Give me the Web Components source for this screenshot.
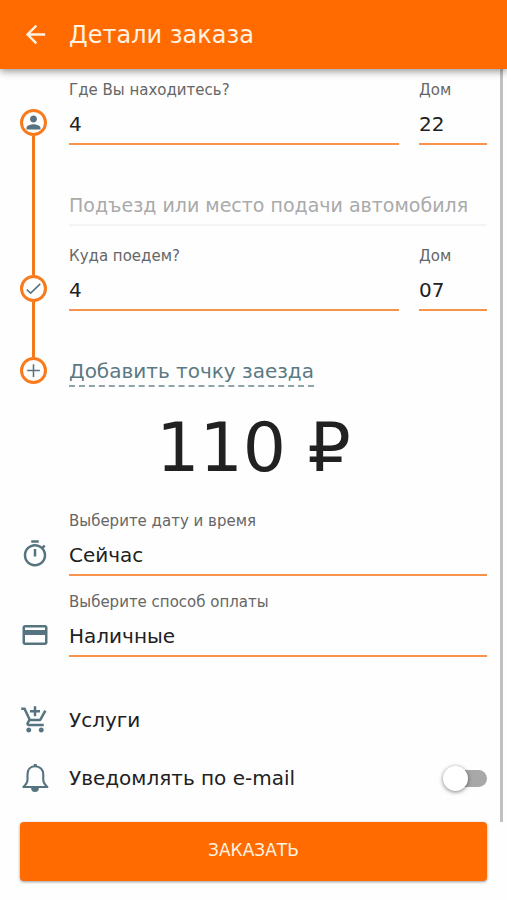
<!DOCTYPE html>
<html lang="ru">
<head>
<meta charset="utf-8">
<meta name="viewport" content="width=device-width, initial-scale=1">
<title>Детали заказа</title>
<style>
  html, body { height: 100%; margin: 0; }
  body {
    --accent: #ff6b00;
    --line: #f9924a;
    --icon: #56747f;
    --text: #212121;
    --muted: #666;
    background: #fefefe;
    color: var(--text);
    font-family: "DejaVu Sans", sans-serif;
    font-size: 20px;
  }
</style>
</head>
<body>
<order-page></order-page>

<script>
const define = (name, html, setup) => {
  const template = document.createElement('template');
  template.innerHTML = html;
  customElements.define(name, class extends HTMLElement {
    constructor() {
      super();
      this.attachShadow({ mode: 'open' }).append(template.content.cloneNode(true));
    }
    connectedCallback() { if (setup) setup(this, this.shadowRoot); }
  });
};

const icons = {
  back: '<path d="M20 11H7.83l5.59-5.59L12 4l-8 8 8 8 1.41-1.41L7.83 13H20v-2z"/>',
  person: '<path d="M12 12c2.21 0 4-1.79 4-4s-1.79-4-4-4-4 1.79-4 4 1.79 4 4 4zm0 2c-2.67 0-8 1.34-8 4v2h16v-2c0-2.66-5.33-4-8-4z"/>',
  check: '<path d="M2.5 13.5l5.5 5L21.500 5.500" fill="none" stroke="currentColor" stroke-width="2.200"/>',
  plus: '<path d="M12 3v18M3 12h18" fill="none" stroke="currentColor" stroke-width="2.200"/>',
  timer: '<path d="M15 1H9v2h6V1zm-4 13h2V8h-2v6zm8.030-6.610l1.420-1.420c-.430-.510-.900-.990-1.410-1.410l-1.420 1.420C16.070 4.740 14.120 4 12 4c-4.970 0-9 4.030-9 9s4.020 9 9 9 9-4.030 9-9c0-2.120-.740-4.070-1.970-5.610zM12 20c-3.870 0-7-3.130-7-7s3.130-7 7-7 7 3.130 7 7-3.130 7-7 7z"/>',
  card: '<path d="M20 4H4c-1.110 0-1.990.890-1.990 2L2 18c0 1.110.890 2 2 2h16c1.110 0 2-.890 2-2V6c0-1.110-.890-2-2-2zm0 14H4v-6h16v6zm0-10H4V6h16v2z"/>',
  cart: '<path d="M11 9h2V6h3V4h-3V1h-2v3H8v2h3v3zm-4 9c-1.100 0-1.990.900-1.990 2S5.900 22 7 22s2-.900 2-2-.900-2-2-2zm10 0c-1.100 0-1.990.900-1.990 2s.890 2 1.990 2 2-.900 2-2-.900-2-2-2zm-9.830-3.250l.030-.120.900-1.630h7.450c.750 0 1.410-.410 1.750-1.030l3.860-7.010L19.420 4h-.010l-1.100 2-2.760 5H8.530l-.130-.270L6.160 6l-.950-2-.940-2H1v2h2l3.600 7.590-1.350 2.450c-.160.280-.250.610-.250.960 0 1.100.900 2 2 2h12v-2H7.420c-.130 0-.250-.110-.250-.250z"/>',
  bell: '<path d="M12 2.600c-4 0-6 2.800-6 6.600v4c0 2.600-1.300 4.200-3.300 6h19.200c-2-1.800-3.300-3.400-3.300-6v-4c0-3.800-2.600-6.600-6.600-6.600z" fill="none" stroke="currentColor" stroke-width="1.700" stroke-linejoin="round"/><path d="M11 .7h2.400v2H11zM8.900 20h6.200a3.100 3.100 0 0 1-6.200 0z"/>'
};

define('app-icon', `
  <style>
    :host { display: block; width: 24px; height: 24px; flex: none; color: var(--icon); }
    svg { display: block; width: 100%; height: 100%; fill: currentColor; }
  </style>
  <svg viewBox="0 0 24 24" aria-hidden="true"></svg>`,
  (host, root) => { root.querySelector('svg').innerHTML = icons[host.getAttribute('name')]; });

define('app-header', `
  <style>
    :host {
      display: flex; align-items: center; height: 69px; flex: none; padding: 0 20px;
      background: var(--accent); color: #fff2e0; z-index: 1;
      box-shadow: 0 2px 8px rgba(0,0,0,.45);
    }
    button { width: 49px; padding: 0 0 0 1px; border: 0; background: none; color: inherit; cursor: pointer; }
    app-icon { width: 29px; height: 29px; color: inherit; }
    h1 { margin: 0; font-size: 24px; line-height: 28px; font-weight: 400; }
  </style>
  <button type="button" aria-label="Назад"><app-icon name="back"></app-icon></button>
  <h1><slot></slot></h1>`);

define('order-field', `
  <style>
    :host { display: flex; flex-direction: column; gap: 6px; min-width: 0; }
    label { font-size: 15px; line-height: 18px; color: var(--muted); white-space: nowrap; }
    label[hidden] { display: none; }
    input, select {
      appearance: none; box-sizing: border-box; width: 100%; height: 40px; margin: 0; padding: 0;
      border: 0; border-bottom: 2px solid var(--line); border-radius: 0; outline: 0;
      background: none; font: inherit; color: inherit;
    }
    input::placeholder { color: #aaa; opacity: 1; }
    input:placeholder-shown { border-color: #f4f4f4; font-size: 19px; }
  </style>
  <label for="control"></label>`,
  (host, root) => {
    const text = host.getAttribute('label');
    const label = root.querySelector('label');
    const control = document.createElement(host.hasAttribute('select') ? 'select' : 'input');
    control.id = 'control';
    if (host.hasAttribute('select')) control.add(new Option(host.getAttribute('value')));
    else control.value = host.getAttribute('value') || '';
    if (text) label.textContent = text;
    else {
      label.hidden = true;
      control.placeholder = host.getAttribute('placeholder');
      control.setAttribute('aria-label', control.placeholder);
    }
    root.append(control);
  });

define('route-stop', `
  <style>
    :host { display: grid; grid-template-columns: 27px minmax(0, 1fr); column-gap: 22px; }
    .rail { display: flex; flex-direction: column; align-items: center; }
    .rail::before, .rail::after { content: ""; width: 3px; background: #f27a1a; }
    .rail::before { height: 28px; }
    .rail::after { flex: 1; }
    :host([first]) .rail::before { background: none; }
    :host([last]) .rail::before, :host([last]) .rail::after { display: none; }
    .dot {
      display: grid; place-items: center; box-sizing: border-box; width: 27px; height: 27px;
      border: 3px solid #f97a1c; border-radius: 50%; background: #fff;
    }
    app-icon { width: 17px; height: 17px; }
    :host([first]) app-icon { width: 21px; height: 21px; }
  </style>
  <div class="rail"><div class="dot"><app-icon></app-icon></div></div>
  <div><slot></slot></div>`,
  (host, root) => {
    const icon = document.createElement('app-icon');
    icon.setAttribute('name', host.getAttribute('icon'));
    root.querySelector('app-icon').replaceWith(icon);
  });

define('order-row', `
  <style>
    :host { display: grid; grid-template-columns: 29px minmax(0, 1fr); column-gap: 20px; }
    .icon { display: flex; align-items: center; }
    :host([field]) .icon { padding-top: 20px; }
    app-icon { width: 30px; height: 30px; }
    :host(:not([field])) { min-height: 58px; }
    .body { display: flex; align-items: center; justify-content: space-between; }
    ::slotted(order-field) { flex: 1; }
  </style>
  <div class="icon"><app-icon></app-icon></div>
  <div class="body"><slot></slot></div>`,
  (host, root) => {
    const icon = document.createElement('app-icon');
    icon.setAttribute('name', host.getAttribute('icon'));
    root.querySelector('app-icon').replaceWith(icon);
  });

define('toggle-row', `
  <style>
    :host { display: flex; flex: 1; align-items: center; justify-content: space-between; }
    label { flex: 1; line-height: 24px; }
    input {
      appearance: none; display: flex; align-items: center; width: 36px; height: 17px; margin: 0;
      border-radius: 9px; background: #a8a8a8; cursor: pointer;
    }
    input::before {
      content: ""; flex: none; width: 25px; height: 25px; margin-left: -8px; border-radius: 50%;
      background: #fff; box-shadow: 0 1px 4px rgba(0,0,0,.5);
    }
    input:checked { justify-content: flex-end; background: var(--line); }
  </style>
  <label for="toggle"><slot></slot></label>
  <input type="checkbox" role="switch" id="toggle">`);

define('order-button', `
  <style>
    :host { display: block; padding: 0 20px 19px; }
    button {
      display: block; width: 100%; height: 59px; padding: 0 0 3px; border: 0; border-radius: 4px;
      background: var(--accent); color: #fff2e0; font: inherit; font-size: 17px; cursor: pointer;
      box-shadow: 0 1px 3px rgba(0,0,0,.4);
    }
  </style>
  <button type="submit"><slot></slot></button>`);

define('order-page', `
  <style>
    :host { display: flex; flex-direction: column; min-height: 100%; }
    .area { display: flex; flex: 1; }
    main { flex: 1; min-width: 0; padding: 12px 13px 15px 20px; }
    .scrollbar { width: 3px; margin-right: 4px; background: #c1c1c1; }
    .pair { display: grid; grid-template-columns: minmax(0, 1fr) 68px; gap: 20px; }
    .entrance { padding: 41px 0 21px; }
    .second { padding-bottom: 46px; }
    a {
      display: inline-block; height: 28px; line-height: 28px;
      color: #5b7983; text-decoration: none; border-bottom: 2px dashed #8fa3aa;
    }
    output { display: block; margin: 21px 0 24px; text-align: center; font-size: 68px; line-height: 80px; }
    .details { display: grid; gap: 17px; margin-bottom: 34px; }
    button { width: 100%; padding: 0; border: 0; background: none; font: inherit; color: inherit; text-align: left; line-height: 24px; cursor: pointer; }
  </style>
  <app-header>Детали заказа</app-header>
  <div class="area">
    <main>
      <route-stop first icon="person">
        <div class="pair">
          <order-field label="Где Вы находитесь?" value="4"></order-field>
          <order-field label="Дом" value="22"></order-field>
        </div>
        <div class="entrance">
          <order-field placeholder="Подъезд или место подачи автомобиля"></order-field>
        </div>
      </route-stop>
      <route-stop icon="check">
        <div class="pair second">
          <order-field label="Куда поедем?" value="4"></order-field>
          <order-field label="Дом" value="07"></order-field>
        </div>
      </route-stop>
      <route-stop last icon="plus"><a href="#add">Добавить точку заезда</a></route-stop>
      <output>110 ₽</output>
      <div class="details">
        <order-row field icon="timer"><order-field label="Выберите дату и время" value="Сейчас" select></order-field></order-row>
        <order-row field icon="card"><order-field label="Выберите способ оплаты" value="Наличные" select></order-field></order-row>
      </div>
      <order-row icon="cart"><button type="button">Услуги</button></order-row>
      <order-row icon="bell"><toggle-row>Уведомлять по e-mail</toggle-row></order-row>
    </main>
    <div class="scrollbar"></div>
  </div>
  <order-button>ЗАКАЗАТЬ</order-button>`);
</script>
</body>
</html>
